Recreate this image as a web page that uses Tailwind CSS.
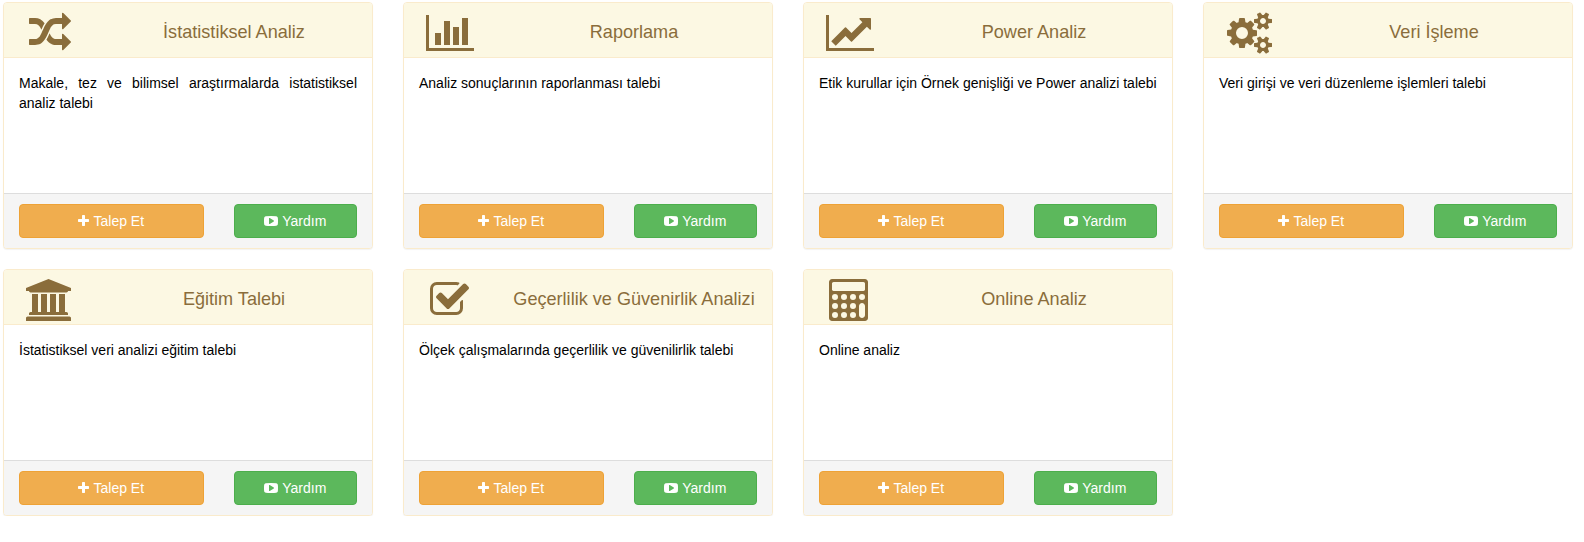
<!DOCTYPE html>
<html lang="tr">
<head>
<meta charset="utf-8">
<title>Analiz Talepleri</title>
<script src="https://cdn.jsdelivr.net/npm/@tailwindcss/browser@4"></script>
</head>
<body class="bg-white font-['Liberation_Sans',Arial,sans-serif] text-sm leading-5 text-black">

<!-- Icon sprite: glyphs are drawn on a 1792-unit em with the y axis pointing up -->
<svg class="hidden" aria-hidden="true">
  <defs>
    <path id="i-random" transform="scale(1,-1)" d="M666 1055q-60 -92 -137 -273q-22 45 -37 72.5t-40.5 63.5t-51 56.5t-63 35t-81.5 14.5h-224q-14 0 -23 9t-9 23v192q0 14 9 23t23 9h224q250 0 410 -225zM1792 256q0 -14 -9 -23l-320 -320q-9 -9 -23 -9q-13 0 -22.5 9.5t-9.5 22.5v192q-32 0 -85 -0.5t-81 -1t-73 1t-71 5t-64 10.5t-63 18.5t-58 28.5t-59 40t-55 53.5t-56 69.5q59 93 136 273q22 -45 37 -72.5t40.5 -63.5t51 -56.5t63 -35t81.5 -14.5h256v192q0 14 9 23t23 9q12 0 24 -10l319 -319q9 -9 9 -23zM1792 1152q0 -14 -9 -23l-320 -320q-9 -9 -23 -9q-13 0 -22.5 9.5t-9.5 22.5v192h-256q-48 0 -87 -15t-69 -45t-51 -61.5t-45 -77.5q-32 -62 -78 -171q-29 -66 -49.5 -111t-54 -105t-64 -100t-74 -83t-90 -68.5t-106.5 -42t-128 -16.5h-224q-14 0 -23 9t-9 23v192q0 14 9 23t23 9h224q48 0 87 15t69 45t51 61.5t45 77.5q32 62 78 171q29 66 49.5 111t54 105t64 100t74 83t90 68.5t106.5 42t128 16.5h256v192q0 14 9 23t23 9q12 0 24 -10l319 -319q9 -9 9 -23z"/>
    <path id="i-bars" transform="scale(1,-1)" d="M640 640v-512h-256v512h256zM1024 1152v-1024h-256v1024h256zM2048 0v-128h-2048v1536h128v-1408h1920zM1408 896v-768h-256v768h256zM1792 1280v-1152h-256v1152h256z"/>
    <path id="i-line" transform="scale(1,-1)" d="M2048 0v-128h-2048v1536h128v-1408h1920zM1920 1248v-435q0 -21 -19.5 -29.5t-35.5 7.5l-121 121l-633 -633q-10 -10 -23 -10t-23 10l-233 233l-416 -416l-192 192l585 585q10 10 23 10t23 -10l233 -233l464 464l-121 121q-16 16 -7.5 35.5t29.5 19.5h435q14 0 23 -9t9 -23z"/>
    <g id="i-cogs" transform="scale(1,-1)" fill-rule="evenodd">
      <path d="M896 640q0 106 -75 181t-181 75t-181 -75t-75 -181t75 -181t181 -75t181 75t75 181zM1280 731v-185q0 -10 -7 -19.5t-16 -10.5l-155 -24q-11 -35 -32 -76q34 -48 90 -115q7 -11 7 -20q0 -12 -7 -19q-23 -30 -82.5 -89.5t-78.5 -59.5q-11 0 -21 7l-115 90q-37 -19 -77 -31q-11 -108 -23 -155q-7 -24 -30 -24h-186q-11 0 -20 7.5t-10 17.5l-23 153q-34 10 -75 31l-118 -89q-7 -7 -20 -7q-11 0 -21 8q-144 133 -144 160q0 9 7 19q10 14 41 53t47 61q-23 44 -35 82l-152 24q-10 1 -17 9.5t-7 19.5v185q0 10 7 19.5t16 10.5l155 24q11 35 32 76q-34 48 -90 115q-7 11 -7 20q0 12 7 20q22 30 82 89t79 59q11 0 21 -7l115 -90q34 18 77 32q11 108 23 154q7 24 30 24h186q11 0 20 -7.5t10 -17.5l23 -153q34 -10 75 -31l118 89q8 7 20 7q11 0 21 -8q144 -133 144 -160q0 -8 -7 -19q-12 -16 -42 -54t-45 -60q23 -48 34 -82l152 -23q10 -2 17 -10.5t7 -19.5z"/>
      <path id="cog-small" d="M1664 128q0 52 -38 90t-90 38t-90 -38t-38 -90q0 -53 37.5 -90.5t90.5 -37.5t90.5 37.5t37.5 90.5zM1920 198v-140q0 -16 -149 -31q-12 -27 -30 -52q51 -113 51 -138q0 -4 -4 -7q-122 -71 -124 -71q-8 0 -46 47t-52 68q-20 -2 -30 -2t-30 2q-14 -21 -52 -68t-46 -47q-2 0 -124 71q-4 3 -4 7q0 25 51 138q-18 25 -30 52q-149 15 -149 31v140q0 16 149 31q13 29 30 52q-51 113 -51 138q0 4 4 7q4 2 35 20t59 34t30 16q8 0 46 -46.5t52 -67.5q20 2 30 2t30 -2q51 71 92 112l6 2q4 0 124 -70q4 -3 4 -7q0 -25 -51 -138q17 -23 30 -52q149 -15 149 -31z"/>
      <use href="#cog-small" y="1024"/>
    </g>
    <path id="i-bank" transform="scale(1,-1)" d="M960 1536l960 -384v-128h-128q0 -26 -20.5 -45t-48.5 -19h-1526q-28 0 -48.5 19t-20.5 45h-128v128zM256 896h256v-768h128v768h256v-768h128v768h256v-768h128v768h256v-768h59q28 0 48.5 -19t20.5 -45v-64h-1664v64q0 26 20.5 45t48.5 19h59v768zM1851 -64q28 0 48.5 -19t20.5 -45v-128h-1920v128q0 26 20.5 45t48.5 19h1782z"/>
    <path id="i-check" transform="scale(1,-1)" d="M1408 606v-318q0 -119 -84.5 -203.5t-203.5 -84.5h-832q-119 0 -203.5 84.5t-84.5 203.5v832q0 119 84.5 203.5t203.5 84.5h832q63 0 117 -25q15 -7 18 -23q3 -17 -9 -29l-49 -49q-10 -10 -23 -10q-3 0 -9 2q-23 6 -45 6h-832q-66 0 -113 -47t-47 -113v-832q0 -66 47 -113t113 -47h832q66 0 113 47t47 113v254q0 13 9 22l64 64q10 10 23 10q6 0 12 -3q20 -8 20 -29zM1639 1095l-814 -814q-24 -24 -57 -24t-57 24l-430 430q-24 24 -24 57t24 57l110 110q24 24 57 24t57 -24l263 -263l647 647q24 24 57 24t57 -24l110 -110q24 -24 24 -57t-24 -57z"/>
    <path id="i-calc" transform="scale(1,-1)" fill-rule="evenodd" d="M1664 1408v-1536q0 -52 -38 -90t-90 -38h-1408q-52 0 -90 38t-38 90v1536q0 52 38 90t90 38h1408q52 0 90 -38t38 -90zM1536 1088v256q0 26 -19 45t-45 19h-1280q-26 0 -45 -19t-19 -45v-256q0 -26 19 -45t45 -19h1280q26 0 45 19t19 45zM1536 0v384q0 52 -38 90t-90 38t-90 -38t-38 -90v-384q0 -52 38 -90t90 -38t90 38t38 90zM384 0a128 128 0 1 0 -256 0a128 128 0 1 0 256 0zM768 0a128 128 0 1 0 -256 0a128 128 0 1 0 256 0zM1152 0a128 128 0 1 0 -256 0a128 128 0 1 0 256 0zM384 384a128 128 0 1 0 -256 0a128 128 0 1 0 256 0zM768 384a128 128 0 1 0 -256 0a128 128 0 1 0 256 0zM1152 384a128 128 0 1 0 -256 0a128 128 0 1 0 256 0zM384 768a128 128 0 1 0 -256 0a128 128 0 1 0 256 0zM768 768a128 128 0 1 0 -256 0a128 128 0 1 0 256 0zM1152 768a128 128 0 1 0 -256 0a128 128 0 1 0 256 0zM1536 768a128 128 0 1 0 -256 0a128 128 0 1 0 256 0z"/>
    <path id="i-plus" transform="scale(1,-1)" d="M1408 800v-192q0 -40 -28 -68t-68 -28h-416v-416q0 -40 -28 -68t-68 -28h-192q-40 0 -68 28t-28 68v416h-416q-40 0 -68 28t-28 68v192q0 40 28 68t68 28h416v416q0 40 28 68t68 28h192q40 0 68 -28t28 -68v-416h416q40 0 68 -28t28 -68z"/>
    <path id="i-play" transform="scale(1,-1)" fill-rule="evenodd" d="M1280 640q0 37 -30 54l-512 320q-31 20 -65 2q-33 -18 -33 -56v-640q0 -38 33 -56q16 -8 31 -8q20 0 34 10l512 320q30 17 30 54zM1792 640q0 -96 -1 -150t-8.5 -136.5t-22.5 -147.5q-16 -73 -69 -123t-124 -58q-222 -25 -671 -25t-671 25q-71 8 -124.5 58t-69.5 123q-14 65 -21.5 147.5t-8.5 136.5t-1 150t1 150t8.5 136.5t22.5 147.5q16 73 69 123t124 58q222 25 671 25t671 -25q71 -8 124.5 -58t69.5 -123q14 -65 21.5 -147.5t8.5 -136.5t1 -150z"/>
  </defs>
</svg>

<main id="cards" class="grid grid-cols-[repeat(4,370px)] gap-x-[30px] gap-y-5 pl-[3px] pt-[2px]"></main>

<template id="card">
  <section class="flex h-[247px] flex-col rounded border border-[#faebcc] bg-white shadow-[0_1px_1px_rgba(0,0,0,0.05)]">
    <header class="flex h-[55px] shrink-0 rounded-t-[3px] border-b border-[#faebcc] bg-[#fcf8e3] text-[#8a6d3b]">
      <div class="flex w-[92px] justify-center pt-[9px]">
        <svg class="h-[42px] fill-current" preserveAspectRatio="xMinYMin meet"><use/></svg>
      </div>
      <h4 class="flex-1 px-[15px] pt-[19px] text-center text-[18.1px] leading-5 whitespace-nowrap"></h4>
    </header>
    <p class="flex-1 p-[15px] text-justify"></p>
    <footer class="flex shrink-0 gap-[30px] rounded-b-[3px] border-t border-[#ddd] bg-[#f5f5f5] px-[15px] py-[10px] text-white">
      <button class="h-[34px] w-[185px] rounded border border-[#eea236] bg-[#f0ad4e]"><svg class="-ml-[0.4px] mr-[0.4px] inline-block h-[14px] w-[11px] fill-current align-[-2px]" viewBox="0 -1536 1408 1792"><use href="#i-plus"/></svg> Talep Et</button>
      <button class="h-[34px] w-[123px] rounded border border-[#4cae4c] bg-[#5cb85c]"><svg class="-ml-[0.4px] mr-[0.4px] inline-block h-[14px] w-[14px] fill-current align-[-2px]" viewBox="0 -1536 1792 1792"><use href="#i-play"/></svg> Yardım</button>
    </footer>
  </section>
</template>

<script>
  // [icon, glyph advance in units, title, description]
  const cards = [
    ['random', 1792, 'İstatistiksel Analiz', 'Makale, tez ve bilimsel araştırmalarda istatistiksel analiz talebi'],
    ['bars', 2048, 'Raporlama', 'Analiz sonuçlarının raporlanması talebi'],
    ['line', 2048, 'Power Analiz', 'Etik kurullar için Örnek genişliği ve Power analizi talebi'],
    ['cogs', 1920, 'Veri İşleme', 'Veri girişi ve veri düzenleme işlemleri talebi'],
    ['bank', 2048, 'Eğitim Talebi', 'İstatistiksel veri analizi eğitim talebi'],
    ['check', 1664, 'Geçerlilik ve Güvenirlik Analizi', 'Ölçek çalışmalarında geçerlilik ve güvenilirlik talebi'],
    ['calc', 1792, 'Online Analiz', 'Online analiz'],
  ];
  const template = document.getElementById('card');
  for (const [icon, advance, title, text] of cards) {
    const card = template.content.cloneNode(true);
    const svg = card.querySelector('header svg');
    svg.setAttribute('viewBox', `0 -1536 ${advance} 1792`);
    // Even widths keep the centred icon on whole pixels
    svg.style.width = `${Math.ceil(advance * 42 / 1792 / 2) * 2}px`;
    svg.firstElementChild.setAttribute('href', `#i-${icon}`);
    card.querySelector('h4').textContent = title;
    card.querySelector('p').textContent = text;
    document.getElementById('cards').append(card);
  }
</script>
</body>
</html>
